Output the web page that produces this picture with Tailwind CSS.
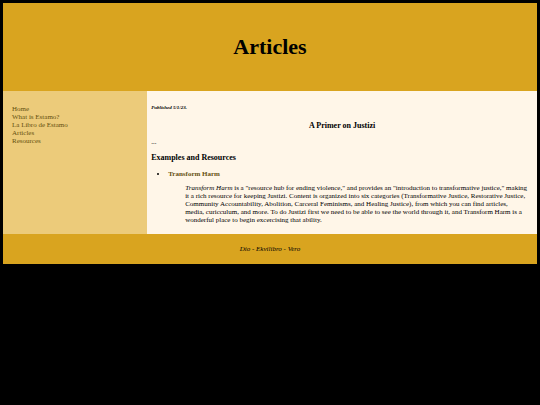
<!DOCTYPE html>
<html lang="en">
<head>
<meta charset="utf-8">
<meta name="viewport" content="width=device-width, initial-scale=1">
<title>Articles</title>
<script src="https://cdn.jsdelivr.net/npm/@tailwindcss/browser@4"></script>
</head>
<body class="min-h-screen bg-black p-[3px] font-['Liberation_Serif','Times_New_Roman',serif] text-[7px] leading-[8px] text-black">
  <header class="bg-[#d9a41f] px-4 py-8 text-center">
    <h1 class="text-[22px] leading-6 font-bold">Articles</h1>
  </header>
  <div class="flex">
    <nav class="w-[27%] bg-[#eccb7a] px-[9px] py-[14px] text-[#65500f]">
      <ul>
        <li><a href="#">Home</a></li>
        <li><a href="#">What is Estamo?</a></li>
        <li><a href="#">La Libro de Estamo</a></li>
        <li><a href="#">Articles</a></li>
        <li><a href="#">Resources</a></li>
      </ul>
    </nav>
    <main class="flex-1 bg-[#fff6e8] px-[4px] pt-[13px] pb-[10px]">
      <p class="text-[5px] font-bold italic">Published 5/1/23.</p>
      <h2 class="mt-[10px] text-center text-[8px] font-bold">A Primer on Justizi</h2>
      <p class="mt-[8px]">...</p>
      <h2 class="mt-[8px] text-[8px] font-bold">Examples and Resources</h2>
      <ul class="mt-[8px] list-disc pl-[17px]">
        <li>
          <a href="#" class="font-bold text-[#65500f]">Transform Harm</a>
          <blockquote class="mt-[6px] ml-[17px]"><em>Transform Harm</em> is a "resource hub for ending violence," and provides an "introduction to transformative justice," making<br> it a rich resource for keeping Justizi. Content is organized into six categories (Transformative Justice, Restorative Justice,<br> Community Accountability, Abolition, Carceral Feminisms, and Healing Justice), from which you can find articles,<br> media, curicculum, and more. To do Justizi first we need to be able to see the world through it, and Transform Harm is a<br> wonderful place to begin excercising that ability.</blockquote>
        </li>
      </ul>
    </main>
  </div>
  <footer class="bg-[#d9a41f] py-[11px] text-center italic">Dio - Ekvilibro - Vero</footer>
</body>
</html>
